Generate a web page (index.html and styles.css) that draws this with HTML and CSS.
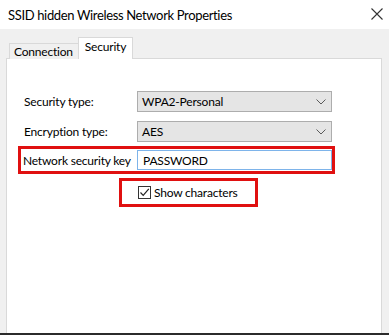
FILE: index.html
```html
<!DOCTYPE html>
<html>
<head>
<meta charset="utf-8">
<link rel="stylesheet" href="styles.css">
</head>
<body>
<div class="window">
  <div class="titlebar">
    <span class="title">SSID hidden Wireless Network Properties</span>
    <svg class="close" width="12" height="12" viewBox="0 0 12 12"><path d="M0.5 0.5 L11.5 11.5 M11.5 0.5 L0.5 11.5" stroke="#333" stroke-width="1.1" fill="none"/></svg>
  </div>
  <div class="body">
    <div class="tabs">
      <div class="tab">Connection</div>
      <div class="tab active">Security</div>
    </div>
    <div class="panel">
      <div class="row">
        <span class="label">Security type:</span>
        <div class="select"><span>WPA2-Personal</span><svg class="chev" width="10" height="6" viewBox="0 0 10 6"><path d="M0.5 0.5 L5 5 L9.5 0.5" stroke="#5a5a5a" stroke-width="1" fill="none"/></svg></div>
      </div>
      <div class="row">
        <span class="label">Encryption type:</span>
        <div class="select"><span>AES</span><svg class="chev" width="10" height="6" viewBox="0 0 10 6"><path d="M0.5 0.5 L5 5 L9.5 0.5" stroke="#5a5a5a" stroke-width="1" fill="none"/></svg></div>
      </div>
      <div class="row keyrow">
        <span class="label">Network security key</span>
        <div class="input">PASSWORD</div>
      </div>
      <div class="checkrow">
        <span class="checkbox"><svg width="11" height="11" viewBox="0 0 11 11"><path d="M1.5 5.5 L4.2 8.3 L9.8 1.8" stroke="#222" stroke-width="1.2" fill="none"/></svg></span>
        <span class="checklabel">Show characters</span>
      </div>
    </div>
  </div>
  <div class="footer"></div>
</div>
</body>
</html>
```
FILE: styles.css
```css
html, body {
  margin: 0;
  padding: 0;
}
body {
  width: 389px;
  height: 335px;
  overflow: hidden;
  font-family: "Lato", "Noto Sans", sans-serif;
  color: #000;
  background: #f0f0f0;
  white-space: nowrap;
  letter-spacing: -0.2px;
}
.window {
  display: flex;
  flex-direction: column;
  height: 335px;
}
.titlebar {
  height: 29px;
  background: #fff;
  display: flex;
  align-items: center;
  justify-content: space-between;
  padding: 0 6px 0 8px;
  flex-shrink: 0;
}
.title {
  font-size: 13px;
  letter-spacing: -0.35px;
  color: #000;
}
.close {
  display: block;
  margin-top: -2px;
}
.body {
  flex: 1;
  display: flex;
  flex-direction: column;
  padding-top: 9px;
}
.tabs {
  display: flex;
  align-items: flex-end;
  padding-left: 9px;
  height: 21px;
  position: relative;
  z-index: 1;
}
.tab {
  font-size: 12px;
  height: 15px;
  line-height: 15px;
  padding: 0 5px 0 4px;
  border: 1px solid #d9d9d9;
  border-bottom: none;
  background: #f0f0f0;
}
.tab.active {
  background: #fff;
  height: 21px;
  line-height: 17px;
  padding: 0 6px;
  margin-left: -1px;
}
.panel {
  flex: 1;
  margin-left: 6px;
  width: 376px;
  box-sizing: border-box;
  background: #fff;
  border: 1px solid #d9d9d9;
  border-bottom: none;
  margin-top: -1px;
  padding-top: 32px;
  display: flex;
  flex-direction: column;
  font-size: 12px;
}
.row {
  display: flex;
  align-items: center;
  padding-left: 17px;
  height: 21px;
  margin-bottom: 9px;
}
.label {
  width: 113px;
  flex-shrink: 0;
}
.select {
  width: 195px;
  height: 21px;
  box-sizing: border-box;
  background: #e5e5e5;
  border: 1px solid #adadad;
  display: flex;
  align-items: center;
  justify-content: space-between;
  padding: 0 5px 0 4px;
}
.chev {
  display: block;
}
.keyrow {
  margin-left: 11px;
  padding-left: 2px;
  width: 317px;
  height: 28px;
  box-sizing: border-box;
  border: 3px solid #e01010;
  margin-top: -5px;
  margin-bottom: 4px;
}
.keyrow .label {
  width: 114px;
}
.input {
  width: 195px;
  height: 20px;
  box-sizing: border-box;
  border: 1px solid #7eb4ea;
  background: #fff;
  display: flex;
  align-items: center;
  padding-left: 5px;
}
.checkrow {
  margin-left: 112px;
  width: 139px;
  height: 29px;
  box-sizing: border-box;
  border: 3px solid #e01010;
  display: flex;
  align-items: center;
  padding-left: 16px;
}
.checkbox {
  width: 13px;
  height: 13px;
  box-sizing: border-box;
  border: 1px solid #333;
  display: flex;
  align-items: center;
  justify-content: center;
  margin-right: 3px;
  background: #fff;
}
.checkbox svg {
  display: block;
}
.footer {
  height: 2px;
  background: #2b2b2b;
  flex-shrink: 0;
}
```
